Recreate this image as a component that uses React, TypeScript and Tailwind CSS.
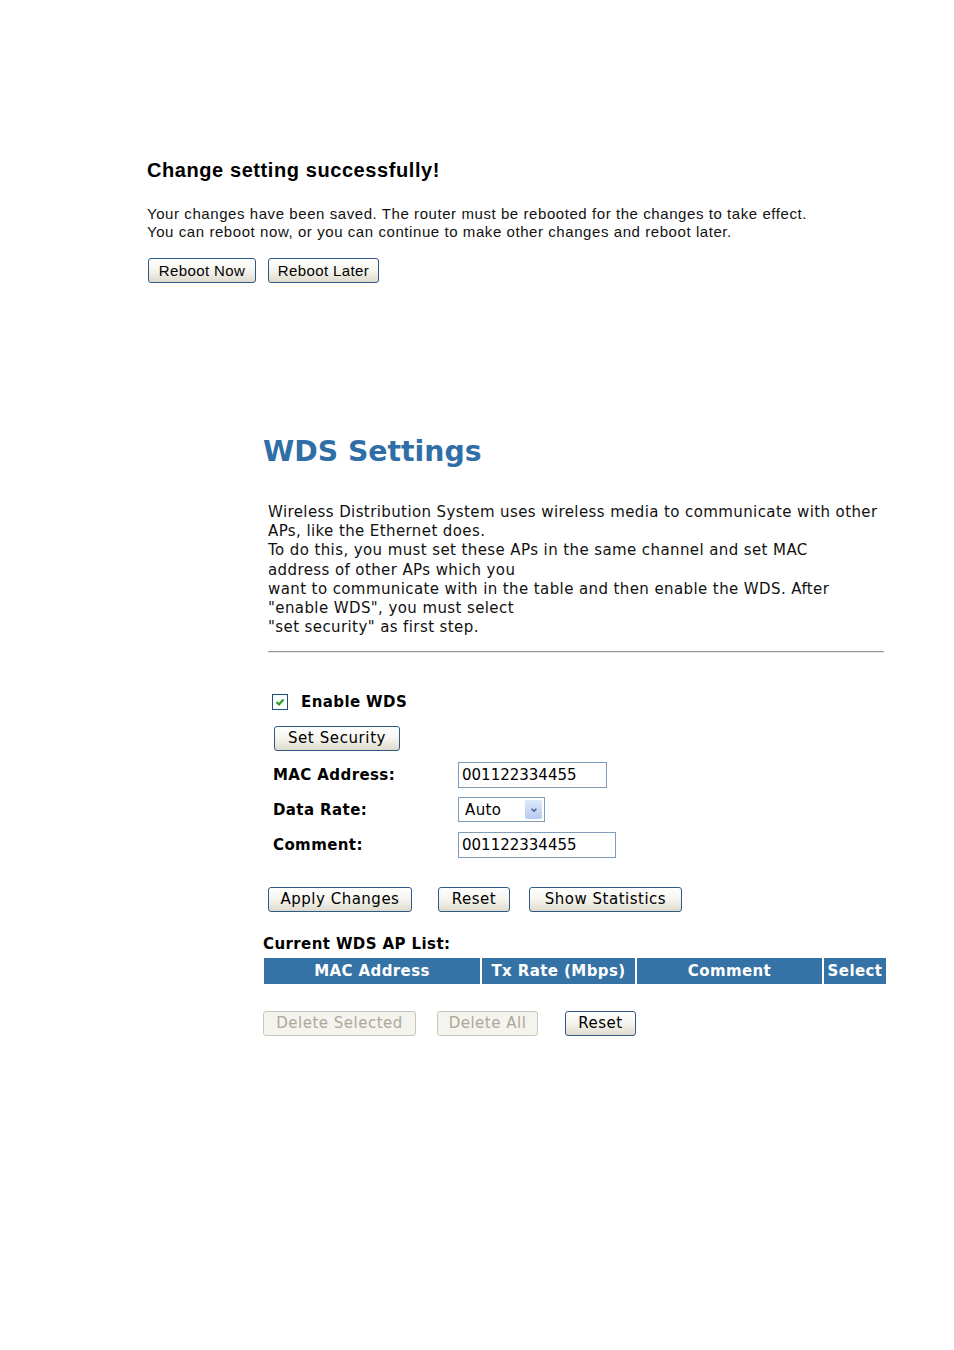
import React from 'react';

const xpBtn =
  'h-[25px] rounded-[3px] border border-[#2f5a88] bg-gradient-to-b from-white via-[#f5f4ee] to-[#dedbcd] text-black leading-none';
const xpBtnOff =
  'h-[25px] rounded-[3px] border border-[#c9c7ba] bg-[#f4f3ee] text-[#aca899] leading-none';

function XpButton({ label, className = '', disabled = false }: { label: string; className?: string; disabled?: boolean }) {
  return (
    <button type="button" className={`${disabled ? xpBtnOff : xpBtn} ${className}`}>
      {label}
    </button>
  );
}

const headers = [
  { label: 'MAC Address', w: 'w-[216px]' },
  { label: 'Tx Rate (Mbps)', w: 'w-[153px]' },
  { label: 'Comment', w: 'w-[185px]' },
  { label: 'Select', w: 'w-[62px]' },
];

export default function App() {
  return (
    <div className="min-h-[1350px] w-[954px] bg-white text-black">
      {/* Reboot notice */}
      <div className="pl-[147px] pt-[157px] font-['Liberation_Sans',Arial,sans-serif]">
        <h2 className="text-[20px] font-bold leading-[27px] tracking-[0.58px]">Change setting successfully!</h2>
        <p className="mt-[21px] text-[15px] leading-[18px] tracking-[0.57px] text-[#111]">
          Your changes have been saved. The router must be rebooted for the changes to take effect.
          <br />
          You can reboot now, or you can continue to make other changes and reboot later.
        </p>
        <div className="mt-[17px] flex gap-[12px] pl-px">
          <XpButton label="Reboot Now" className="w-[108px] text-[15px] tracking-[0.4px]" />
          <XpButton label="Reboot Later" className="w-[111px] text-[15px] tracking-[0.4px]" />
        </div>
      </div>

      {/* WDS settings */}
      <div className="pl-[263px] pt-[151px] font-['DejaVu_Sans',Verdana,sans-serif]">
        <h1 className="text-[28.3px] font-bold leading-[36px] text-[#2f6ea6]">WDS Settings</h1>

        <div className="ml-[5px] mt-[33px] w-[620px]">
          <p className="text-[15px] leading-[19.2px] tracking-[0.4px] text-[#111]">
            Wireless Distribution System uses wireless media to communicate with other
            <br />
            APs, like the Ethernet does.
            <br />
            To do this, you must set these APs in the same channel and set MAC
            <br />
            address of other APs which you
            <br />
            want to communicate with in the table and then enable the WDS. After
            <br />
            "enable WDS", you must select
            <br />
            "set security" as first step.
          </p>
          <div className="mt-[14px] h-[2px] w-[616px] border-t border-[#9a9a9a] bg-[#e6e6e6]" />
        </div>

        <div className="ml-[10px] mt-[40px] tracking-[0.4px]">
          <div className="flex h-[18px] items-center">
            <div className="-ml-px flex h-[16px] w-[16px] items-center justify-center border border-[#1c5180] bg-white">
              <svg viewBox="0 0 10 10" className="h-[10px] w-[10px]">
                <path d="M1.5 5 L4 7.5 L8.5 2.5" fill="none" stroke="#21a121" strokeWidth="2.2" />
              </svg>
            </div>
            <span className="ml-[13px] text-[15px] font-bold leading-[18px]">Enable WDS</span>
          </div>

          <XpButton label="Set Security" className="ml-px mt-[15px] w-[126px] text-[15px] tracking-[0.6px]" />

          <div className="mt-[11px] flex items-center">
            <span className="w-[185px] text-[15px] font-bold leading-[18px]">MAC Address:</span>
            <div className="flex h-[26px] w-[149px] items-center border border-[#7f9db9] px-[3px] text-[15px] tracking-normal">
              001122334455
            </div>
          </div>
          <div className="mt-[9px] flex items-center">
            <span className="w-[185px] text-[15px] font-bold leading-[18px]">Data Rate:</span>
            <div className="flex h-[25px] w-[87px] items-center justify-between border border-[#7f9db9] pl-[6px] pr-[2px] text-[15px]">
              <span>Auto</span>
              <div className="flex h-[19px] w-[17px] items-center justify-center rounded-[2px] bg-gradient-to-b from-[#dde8fb] to-[#b6cbf2]">
                <svg viewBox="0 0 10 10" className="h-[8px] w-[8px]">
                  <path d="M2 3.5 L5 6.5 L8 3.5" fill="none" stroke="#4d6185" strokeWidth="2" />
                </svg>
              </div>
            </div>
          </div>
          <div className="mt-[10px] flex items-center">
            <span className="w-[185px] text-[15px] font-bold leading-[18px]">Comment:</span>
            <div className="flex h-[26px] w-[158px] items-center border border-[#7f9db9] px-[3px] text-[15px] tracking-normal">
              001122334455
            </div>
          </div>
        </div>

        <div className="ml-[5px] mt-[29px] flex">
          <XpButton label="Apply Changes" className="w-[144px] text-[15px] tracking-[0.5px]" />
          <XpButton label="Reset" className="ml-[26px] w-[72px] text-[15px] tracking-[0.5px]" />
          <XpButton label="Show Statistics" className="ml-[19px] w-[153px] text-[15px] tracking-[0.5px]" />
        </div>

        <div className="mt-[23px] text-[15px] font-bold leading-[18px] tracking-[0.4px]">Current WDS AP List:</div>
        <div className="ml-px mt-[5px] flex gap-[2px]">
          {headers.map((h) => (
            <div
              key={h.label}
              className={`${h.w} flex h-[26px] items-center justify-center bg-[#3573a6] text-[15px] font-bold tracking-[0.4px] text-white`}
            >
              {h.label}
            </div>
          ))}
        </div>

        <div className="mt-[27px] flex">
          <XpButton label="Delete Selected" disabled className="w-[153px] text-[15px] tracking-[0.5px]" />
          <XpButton label="Delete All" disabled className="ml-[21px] w-[101px] text-[15px] tracking-[0.5px]" />
          <XpButton label="Reset" className="ml-[27px] w-[71px] text-[15px] tracking-[0.5px]" />
        </div>
      </div>
    </div>
  );
}
